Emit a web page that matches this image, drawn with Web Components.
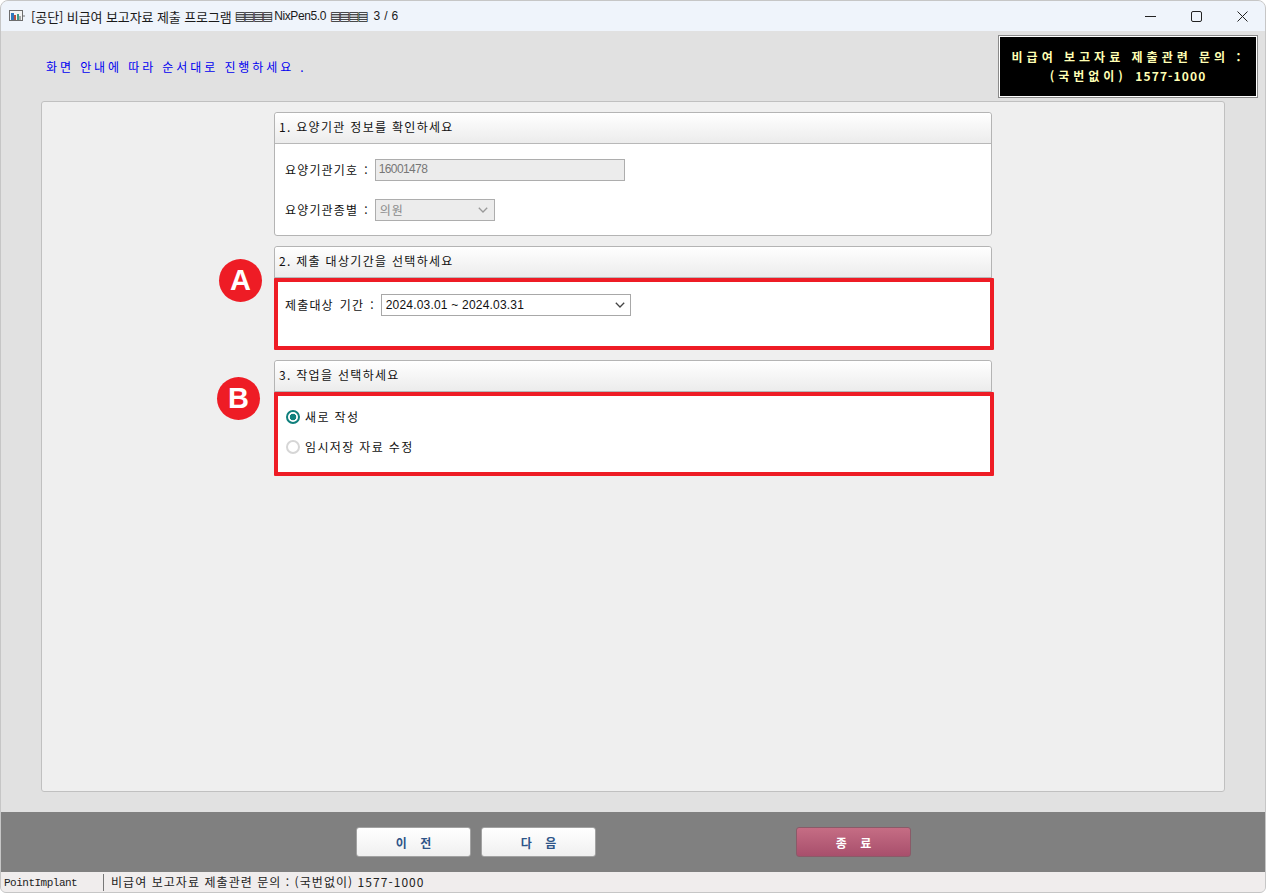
<!DOCTYPE html>
<html lang="ko">
<head>
<meta charset="utf-8">
<title>비급여 보고자료 제출 프로그램</title>
<style>
  html, body { margin: 0; height: 100%; background: #fff; }
  body { font: 12px "Noto Sans CJK KR", "Noto Sans", sans-serif; color: #111; overflow: hidden; }
</style>
</head>
<body>

<app-window>
  <title-bar slot="title">
    <span slot="name">[공단] 비급여 보고자료 제출 프로그램</span>
    <span slot="version">NixPen5.0</span>
    <span slot="step">3 / 6</span>
  </title-bar>

  <notice-row slot="top">
    화면 안내에 따라 순서대로 진행하세요 .
    <span slot="contact">비급여 보고자료 제출관련 문의 :</span>
    <span slot="phone"><span style="letter-spacing:4px">(국번없이)</span><span style="margin-left:4px"> 1577-1000</span></span>
  </notice-row>

  <group-box heading="1. 요양기관 정보를 확인하세요" style="height:124px;margin-bottom:10px">
    <field-row label="요양기관기호 :" style="margin:15px 0 18px 10px">
      <fake-input value="16001478" style="width:250px"></fake-input>
    </field-row>
    <field-row label="요양기관종별 :" style="margin-left:10px">
      <fake-select value="의원" disabled style="width:120px"></fake-select>
    </field-row>
  </group-box>

  <group-box heading="2. 제출 대상기간을 선택하세요" mark="A"
    style="height:102px;margin-bottom:12px;--badge-left:-56px;--badge-top:12px;--mark-bottom:-3px">
    <field-row label="제출대상 기간 :" style="margin:16px 0 0 10px">
      <fake-select value="2024.03.01 ~ 2024.03.31" style="width:250px"></fake-select>
    </field-row>
  </group-box>

  <group-box heading="3. 작업을 선택하세요" mark="B"
    style="height:114px;--badge-left:-58px;--badge-top:16px;--mark-bottom:-3px">
    <radio-item checked style="margin:14px 0 0 11px">새로 작성</radio-item>
    <radio-item style="margin:10px 0 0 11px">임시저장 자료 수정</radio-item>
  </group-box>

  <action-button slot="actions">이&nbsp;&nbsp;&nbsp;&nbsp;전</action-button>
  <action-button slot="actions" style="margin-left:10px">다&nbsp;&nbsp;&nbsp;&nbsp;음</action-button>
  <action-button slot="actions" danger style="margin-left:200px">종&nbsp;&nbsp;&nbsp;&nbsp;료</action-button>

  <span slot="status-left">PointImplant</span>
  <span slot="status-right">비급여 보고자료 제출관련 문의 : (국번없이) 1577-1000</span>
</app-window>

<script>
  const KO = `"Noto Sans CJK KR", "Noto Sans", sans-serif`;
  const CHEVRON = `<svg width="10" height="6" viewBox="0 0 10 6"><path d="M0.8 0.8 L5 5 L9.2 0.8" fill="none" stroke="currentColor" stroke-width="1.3"/></svg>`;

  // Outer window: frame, panel and the bottom bars
  class AppWindow extends HTMLElement {
    constructor() {
      super();
      this.attachShadow({ mode: "open" }).innerHTML = `
        <style>
          :host { display: flex; flex-direction: column; box-sizing: border-box; width: 1266px; height: 893px;
                  border: 1px solid #c6c6c6; border-radius: 8px 8px 6px 6px; overflow: hidden; background: #e1e1e1; }
          .main { flex: 1; min-height: 0; display: flex; flex-direction: column; padding: 0 40px 20px; }
          .panel { flex: 1; box-sizing: border-box; background: #efefef; border: 1px solid #c0c0c0; border-radius: 3px;
                   padding: 10px 232px 0 232px; }
          .bar { height: 60px; background: #808080; display: flex; align-items: center; padding-left: 355px; }
          .status { height: 20px; background: #f0eded; display: flex; align-items: center; font-size: 12px;
                    letter-spacing: 1.05px; color: #222; }
          .left { width: 102px; padding-left: 3px; box-sizing: border-box; font-family: "Liberation Mono", monospace; font-size: 11px; letter-spacing: -.5px;
                  position: relative; top: 1px; }
          .right { border-left: 1px solid #777; padding-left: 7px; height: 17px; line-height: 16px; }
        </style>
        <slot name="title"></slot>
        <div class="main">
          <slot name="top"></slot>
          <div class="panel"><slot></slot></div>
        </div>
        <div class="bar"><slot name="actions"></slot></div>
        <div class="status">
          <div class="left"><slot name="status-left"></slot></div>
          <div class="right"><slot name="status-right"></slot></div>
        </div>`;
    }
  }

  class TitleBar extends HTMLElement {
    constructor() {
      super();
      this.attachShadow({ mode: "open" }).innerHTML = `
        <style>
          :host { display: flex; align-items: center; height: 30px; background: #eff4fb; flex: none;
                  font: 13px ${KO}; color: #1a1a1a; letter-spacing: -.1px; }
          .icon { margin: 0 6px 0 8px; flex: none; }
          .text { flex: 1; display: flex; align-items: center; white-space: pre; }
          .hatch { font: 12px/1 "DejaVu Sans", sans-serif; color: #222; margin: 0 3px; letter-spacing: -2.2px; }
          .ver { font: 12px "Liberation Sans", sans-serif; letter-spacing: -.4px; margin-right: 1px; }
          .step { font: 12px "Liberation Sans", sans-serif; margin-left: 4px; letter-spacing: .3px; }
          .ctl { display: flex; flex: none; }
          .ctl div { width: 46px; height: 30px; display: flex; align-items: center; justify-content: center; }
          .ctl svg { stroke: #222; fill: none; stroke-width: 1; }
        </style>
        <svg class="icon" width="16" height="12" viewBox="0 0 16 12">
          <rect x=".5" y=".5" width="13" height="10" fill="#f4f4f4" stroke="#6d6d6d"/>
          <path d="M14 6h2" stroke="#777"/>
          <rect x="2" y="3" width="3" height="7" fill="#2f78bd"/>
          <rect x="5" y="5" width="2" height="5" fill="#b9503f"/>
          <rect x="8" y="4" width="2" height="6" fill="#3f9a8a"/>
          <rect x="10" y="6" width="2" height="4" fill="#a9a9a9"/>
        </svg>
        <div class="text">
          <slot name="name"></slot><span class="hatch">▤▤▤▤</span><span class="ver"><slot name="version"></slot></span><span class="hatch">▤▤▤▤</span><span class="step"><slot name="step"></slot></span>
        </div>
        <div class="ctl">
          <div><svg width="11" height="11" viewBox="0 0 11 11"><path d="M0 5.5H11"/></svg></div>
          <div><svg width="11" height="11" viewBox="0 0 11 11"><rect x=".5" y=".5" width="10" height="10" rx="1.5"/></svg></div>
          <div><svg width="11" height="11" viewBox="0 0 11 11"><path d="M.5 .5L10.5 10.5M10.5 .5L.5 10.5"/></svg></div>
        </div>`;
    }
  }

  // Blue hint on the left, black contact box on the right
  class NoticeRow extends HTMLElement {
    constructor() {
      super();
      this.attachShadow({ mode: "open" }).innerHTML = `
        <style>
          :host { display: flex; align-items: center; justify-content: space-between; height: 70px; flex: none; }
          .hint { color: #0000f0; letter-spacing: 2.9px; margin: 1px 0 0 5px; }
          .box { box-sizing: border-box; width: 258px; height: 61px; margin-right: -32px; background: #000; color: #ffffb4;
                 border: 1px solid #fff; outline: 1px solid #8a8a8a; display: flex; flex-direction: column; align-items: center; justify-content: center;
                 font-weight: 700; line-height: 19px; }
          .l1 { letter-spacing: 4px; white-space: nowrap; }
          .l2 { letter-spacing: 1.1px; white-space: nowrap; }
        </style>
        <div class="hint"><slot></slot></div>
        <div class="box">
          <div class="l1"><slot name="contact"></slot></div>
          <div class="l2"><slot name="phone"></slot></div>
        </div>`;
    }
  }

  // Titled section box; "mark" adds the red annotation frame and lettered badge
  class GroupBox extends HTMLElement {
    constructor() {
      super();
      const mark = this.getAttribute("mark");
      this.attachShadow({ mode: "open" }).innerHTML = `
        <style>
          :host { display: block; position: relative; box-sizing: border-box; width: 718px; background: #fff;
                  border: 1px solid #b4b4b4; border-radius: 3px; }
          .head { height: 31px; box-sizing: border-box; border-bottom: 1px solid #b8b8b8; border-radius: 3px 3px 0 0;
                  background: linear-gradient(#ffffff, #ececec); padding-left: 4px; line-height: 28px; letter-spacing: 1.3px; color: #111; }
          .frame { position: absolute; left: -1px; right: -3px; top: 31px; bottom: var(--mark-bottom, 0); box-sizing: border-box;
                   border: 4px solid #ee1c25; border-radius: 1px; pointer-events: none; }
          .badge { position: absolute; left: var(--badge-left); top: var(--badge-top); width: 43px; height: 43px; border-radius: 50%;
                   background: #ee1c25; color: #fff; font: 700 29px/43px "Liberation Sans", sans-serif; text-align: center; }
        </style>
        <div class="head"></div>
        <slot></slot>
        ${mark ? `<div class="frame"></div><div class="badge">${mark}</div>` : ""}`;
      this.shadowRoot.querySelector(".head").textContent = this.getAttribute("heading");
    }
  }

  class FieldRow extends HTMLElement {
    constructor() {
      super();
      this.attachShadow({ mode: "open" }).innerHTML = `
        <style>
          :host { display: flex; align-items: center; gap: 6px; letter-spacing: 1.15px; word-spacing: 1.5px; color: #111; }
          span { position: relative; top: -1px; }
        </style>
        <span></span><slot></slot>`;
      this.shadowRoot.querySelector("span").textContent = this.getAttribute("label");
    }
  }

  class FakeInput extends HTMLElement {
    constructor() {
      super();
      this.attachShadow({ mode: "open" }).innerHTML = `
        <style>
          :host { display: block; box-sizing: border-box; height: 22px; background: #ececec; border: 1px solid #adadad;
                  padding-left: 3px; line-height: 19px; color: #777; font-family: "Liberation Sans", sans-serif; letter-spacing: -.6px; }
        </style>
        <span></span>`;
      this.shadowRoot.querySelector("span").textContent = this.getAttribute("value");
    }
  }

  class FakeSelect extends HTMLElement {
    constructor() {
      super();
      this.attachShadow({ mode: "open" }).innerHTML = `
        <style>
          :host { display: flex; align-items: center; justify-content: space-between; box-sizing: border-box; height: 22px;
                  background: #fff; border: 1px solid #a8a8a8; padding: 0 5px 0 4px; color: #111; letter-spacing: .2px; word-spacing: 0; }
          :host([disabled]) { background: #ececec; border-color: #adadad; color: #8a8a8a; padding-right: 6px; }
          svg { flex: none; color: #444; }
          :host([disabled]) svg { color: #999; }
          :host([disabled]) span { position: relative; top: -1px; letter-spacing: 1px; }
          span { font-family: "Liberation Sans", ${KO}; }
        </style>
        <span></span>${CHEVRON}`;
      this.shadowRoot.querySelector("span").textContent = this.getAttribute("value");
    }
  }

  class RadioItem extends HTMLElement {
    constructor() {
      super();
      this.attachShadow({ mode: "open" }).innerHTML = `
        <style>
          :host { display: flex; align-items: center; gap: 5px; height: 20px; letter-spacing: 1.35px; color: #111; }
          .dot { box-sizing: border-box; width: 14px; height: 14px; border-radius: 50%; border: 2px solid #d6d6d6; background: #fff; position: relative; top: 1px; }
          :host([checked]) .dot { border-color: #0f7f7c; background: radial-gradient(circle, #0f7f7c 0 3px, #fff 3.6px); }
        </style>
        <div class="dot"></div><slot></slot>`;
    }
  }

  class ActionButton extends HTMLElement {
    constructor() {
      super();
      this.attachShadow({ mode: "open" }).innerHTML = `
        <style>
          :host { display: flex; align-items: center; justify-content: center; box-sizing: border-box; width: 115px; height: 30px;
                  border: 1px solid #a2a2a2; border-radius: 3px; background: linear-gradient(#ffffff, #f0f0f0);
                  color: #2d5488; font-weight: 700; font-size: 12px; }
          :host([danger]) { border-color: #8a5a68; background: linear-gradient(#c56d84, #a84f6c); color: #fff; }
        </style>
        <slot></slot>`;
    }
  }

  customElements.define("app-window", AppWindow);
  customElements.define("title-bar", TitleBar);
  customElements.define("notice-row", NoticeRow);
  customElements.define("group-box", GroupBox);
  customElements.define("field-row", FieldRow);
  customElements.define("fake-input", FakeInput);
  customElements.define("fake-select", FakeSelect);
  customElements.define("radio-item", RadioItem);
  customElements.define("action-button", ActionButton);
</script>
</body>
</html>
